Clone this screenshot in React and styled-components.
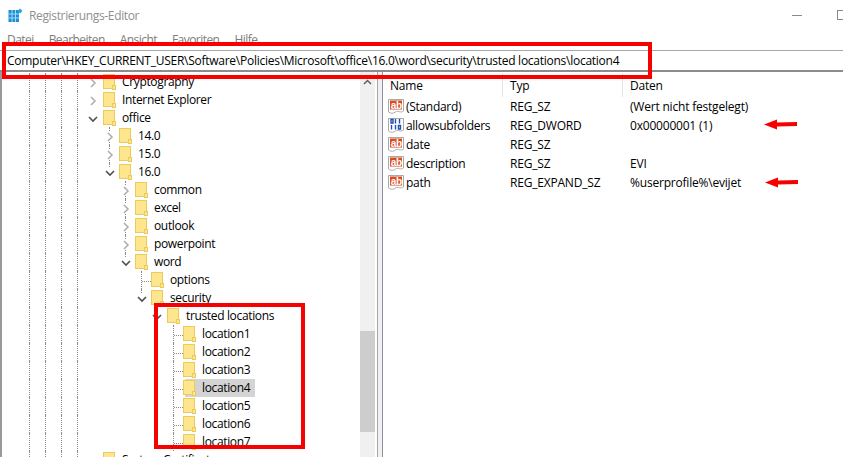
import React from 'react';
import styled, { createGlobalStyle } from 'styled-components';

const GlobalStyle = createGlobalStyle`
  html, body { margin: 0; padding: 0; background: #fff; overflow: hidden; }
  body { font-family: "Open Sans", "Noto Sans", sans-serif; font-size: 12px; color: #000; }
`;

const Window = styled.div`
  position: relative;
  width: 843px;
  height: 457px;
  display: flex;
  flex-direction: column;
  overflow: hidden;
  background: #fff;
`;

const TitleBar = styled.div`
  height: 30px;
  flex: none;
  display: flex;
  align-items: center;
  padding-left: 8px;
  gap: 6px;
  color: #8f8f8f;
`;

const TitleText = styled.span`
  font-size: 12px;
  flex: 1;
  letter-spacing: -0.35px;
`;

const WindowButtons = styled.div`
  display: flex;
  align-items: center;
  gap: 35px;
  margin-right: -4px;
`;

const Minimize = styled.span`
  width: 10px;
  height: 1px;
  background: #8a8a8a;
`;

const Maximize = styled.span`
  width: 10px;
  height: 10px;
  box-sizing: border-box;
  border: 1px solid #8a8a8a;
`;

const MenuBar = styled.div`
  height: 19px;
  flex: none;
  display: flex;
  gap: 15px;
  padding: 0 0 0 7px;
  align-items: center;
  color: #7d7d7d;
  font-size: 12px;
  letter-spacing: -0.55px;
`;

const AddressBar = styled.div`
  height: 19px;
  flex: none;
  margin-top: 1px;
  border-top: 1px solid #a8a8a8;
  border-bottom: 2px solid #8c8c8c;
  padding-left: 7px;
  line-height: 19px;
  font-size: 12px;
  white-space: nowrap;
  letter-spacing: -0.26px;
`;

const Panes = styled.div`
  flex: 1;
  min-height: 0;
  display: flex;
`;

const TreePane = styled.div`
  width: 360px;
  flex: none;
  padding-top: 1px;
  border-left: 2px solid #9a9a9a;
  box-sizing: border-box;
  overflow: hidden;
`;

const TreeRow = styled.div`
  height: 18px;
  display: flex;
  align-items: center;
  padding-left: 27px;
`;

const Guide = styled.span`
  width: 16px;
  height: 18px;
  flex: none;
  box-sizing: border-box;
  border-left: ${p => (p.$on ? '1px dotted #8a8a8a' : '0')};
`;

const Elbow = styled.span`
  width: 16px;
  height: ${p => (p.$last ? '10px' : '18px')};
  align-self: flex-start;
  flex: none;
  box-sizing: border-box;
  position: relative;
  border-left: ${p => (p.$line ? '1px dotted #8a8a8a' : '0')};
  &::after {
    content: '';
    display: ${p => (p.$stub ? 'block' : 'none')};
    position: absolute;
    left: 0;
    top: 10px;
    width: 9px;
    border-top: 1px dotted #8a8a8a;
  }
`;

const Chevron = styled.svg`
  position: absolute;
  left: -5px;
  top: 5px;
  width: 10px;
  height: 10px;
  background: #fff;
`;

const NodeIcon = styled.svg`
  flex: none;
  width: 13px;
  height: 16px;
  margin-left: -6px;
`;

const NodeLabel = styled.span`
  margin-left: 4px;
  padding: 0 2px 0 2px;
  line-height: 18px;
  letter-spacing: -0.35px;
  white-space: nowrap;
`;

const Selected = styled.div`
  display: flex;
  align-items: center;
  height: 18px;
  margin-left: -4px;
  padding-left: 4px;
  padding-right: 3px;
  background: ${p => (p.$on ? '#d4d4d4' : 'transparent')};
`;

const Scrollbar = styled.div`
  width: 15px;
  flex: none;
  background: #f0f0f0;
  display: flex;
  flex-direction: column;
  align-items: center;
`;

const ScrollArrow = styled.svg`
  width: 9px;
  height: 6px;
  margin: 7px 0 246px;
`;

const ScrollThumb = styled.div`
  width: 15px;
  height: 101px;
  background: #cdcdcd;
`;

const Splitter = styled.div`
  width: 8px;
  flex: none;
  box-sizing: border-box;
  background: linear-gradient(to right, #fff 2px, #a4a4a4 2px, #a4a4a4 3px, #f0f0f0 3px, #f0f0f0 7px, #8b8fa0 7px);
`;

const ListPane = styled.div`
  flex: 1;
  min-width: 0;
`;

const cols = '120px 120px 1fr';

const ListHeader = styled.div`
  display: grid;
  grid-template-columns: ${cols};
  height: 25px;
  align-items: center;
`;

const HeadCell = styled.div`
  height: 24px;
  line-height: 25px;
  padding-left: 7px;
  border-right: 1px solid #e5e5e5;
  letter-spacing: -0.2px;
  &:last-child { border-right: 0; }
`;

const ListRow = styled.div`
  display: grid;
  grid-template-columns: ${cols};
  height: 19px;
  align-items: center;
`;

const NameCell = styled.div`
  display: flex;
  align-items: center;
  gap: 2px;
  padding-left: 5px;
  letter-spacing: -0.3px;
  white-space: nowrap;
`;

const ListCell = styled.div`
  padding-left: 7px;
  letter-spacing: -0.2px;
  white-space: nowrap;
`;

const ValueIcon = styled.svg`
  width: 16px;
  height: 17px;
  flex: none;
`;

const AbText = styled.text`
  font-family: "Liberation Sans", sans-serif;
  font-size: 10px;
  font-weight: 700;
  letter-spacing: -0.2px;
  fill: #fff;
`;

const RedBox = styled.div`
  position: absolute;
  box-sizing: border-box;
  border: 4px solid #f60000;
  left: ${p => p.$x}px;
  top: ${p => p.$y}px;
  width: ${p => p.$w}px;
  height: ${p => p.$h}px;
`;

const RedArrow = styled.svg`
  position: absolute;
  left: ${p => p.$x}px;
  top: ${p => p.$y}px;
  width: 36px;
  height: 12px;
`;

function RegIcon() {
  return (
    <svg width="15" height="15" viewBox="0 0 15 15">
      <rect x="0.5" y="2" width="10.5" height="12" fill="#1e8fd6" />
      <path d="M4 2v12M7.5 2v12M0.5 6h10.5M0.5 10h10.5" stroke="#9fdcf6" strokeWidth="1" />
      <path d="M12 0.5l2.5 2.5-2.5 2.5-2.5-2.5z" fill="#2aa5dd" />
    </svg>
  );
}

function Folder() {
  return (
    <NodeIcon viewBox="0 0 13 16">
      <rect x="0.5" y="0.5" width="11" height="14" fill="#fde68e" stroke="#eccb5c" />
      <rect x="9.5" y="11.5" width="3" height="4" fill="#fde68e" stroke="#eccb5c" />
    </NodeIcon>
  );
}

function Expander({ open }) {
  return open ? (
    <Chevron viewBox="0 0 10 10">
      <path d="M1 3l4 4 4-4" fill="none" stroke="#4f4f4f" strokeWidth="1.6" />
    </Chevron>
  ) : (
    <Chevron viewBox="0 0 10 10">
      <path d="M3 1l4 4-4 4" fill="none" stroke="#b0b0b0" strokeWidth="1.6" />
    </Chevron>
  );
}

function Sheet() {
  return <path d="M0.5 1.5h15v11.5c-3 2.500-5-1-8 1s-4.500 1.500-7 0z" fill="#fff" stroke="#a8a8a8" />;
}

function AbIcon() {
  return (
    <ValueIcon viewBox="0 0 16 17">
      <Sheet />
      <rect x="2" y="2.500" width="12" height="9" fill="#dc4a20" />
      <AbText x="2.700" y="10.500">ab</AbText>
    </ValueIcon>
  );
}

function BinIcon() {
  return (
    <ValueIcon viewBox="0 0 16 17">
      <Sheet />
      <path d="M3 2.500h2v3.500h-2zM7.500 2v4.500M11.500 2v4.500M3.500 8v4.500M7.500 8v4.500M10.500 8.500h2v3.500h-2z" fill="none" stroke="#1f4fb0" strokeWidth="1.400" />
    </ValueIcon>
  );
}

function Arrow({ x, y }) {
  return (
    <RedArrow $x={x} $y={y} viewBox="0 0 36 12">
      <path d="M1 6.500L14 1.500v3L34 4v4L14 8.500v3z" fill="#f80000" />
    </RedArrow>
  );
}

// d: nesting below the office level, line: dotted guide runs through the expander column
const treeRows = [
  { label: 'Cryptography', d: 0, exp: 'closed' },
  { label: 'Internet Explorer', d: 0, exp: 'closed' },
  { label: 'office', d: 0, exp: 'open' },
  { label: '14.0', d: 1, exp: 'closed', line: true },
  { label: '15.0', d: 1, exp: 'closed', line: true },
  { label: '16.0', d: 1, exp: 'open', line: true, last: true },
  { label: 'common', d: 2, exp: 'closed', line: true },
  { label: 'excel', d: 2, exp: 'closed', line: true },
  { label: 'outlook', d: 2, exp: 'closed', line: true },
  { label: 'powerpoint', d: 2, exp: 'closed', line: true },
  { label: 'word', d: 2, exp: 'open', line: true, last: true },
  { label: 'options', d: 3, line: true, stub: true },
  { label: 'security', d: 3, exp: 'open', line: true, last: true },
  { label: 'trusted locations', d: 4, exp: 'open' },
  { label: 'location1', d: 5, line: true, stub: true },
  { label: 'location2', d: 5, line: true, stub: true },
  { label: 'location3', d: 5, line: true, stub: true },
  { label: 'location4', d: 5, line: true, stub: true, selected: true },
  { label: 'location5', d: 5, line: true, stub: true },
  { label: 'location6', d: 5, line: true, stub: true },
  { label: 'location7', d: 5, line: true, stub: true },
  { label: 'System Certificates', d: 0 },
];

const values = [
  { icon: 'ab', name: '(Standard)', type: 'REG_SZ', data: '(Wert nicht festgelegt)' },
  { icon: 'bin', name: 'allowsubfolders', type: 'REG_DWORD', data: '0x00000001 (1)' },
  { icon: 'ab', name: 'date', type: 'REG_SZ', data: '' },
  { icon: 'ab', name: 'description', type: 'REG_SZ', data: 'EVI' },
  { icon: 'ab', name: 'path', type: 'REG_EXPAND_SZ', data: '%userprofile%\\evijet' },
];

export default function App() {
  return (
    <Window>
      <GlobalStyle />
      <TitleBar>
        <RegIcon />
        <TitleText>Registrierungs-Editor</TitleText>
        <WindowButtons>
          <Minimize />
          <Maximize />
        </WindowButtons>
      </TitleBar>
      <MenuBar>
        <span>Datei</span>
        <span>Bearbeiten</span>
        <span>Ansicht</span>
        <span>Favoriten</span>
        <span>Hilfe</span>
      </MenuBar>
      <AddressBar>Computer\HKEY_CURRENT_USER\Software\Policies\Microsoft\office\16.0\word\security\trusted locations\location4</AddressBar>
      <Panes>
        <TreePane>
          {treeRows.map(row => (
            <TreeRow key={row.label}>
              {[0, 1, 2, 3].map(i => <Guide key={i} $on />)}
              {Array.from({ length: row.d }).map((_, i) => <Guide key={i} />)}
              <Elbow $line={row.line} $stub={row.stub} $last={row.last}>
                {row.exp && <Expander open={row.exp === 'open'} />}
              </Elbow>
              <Selected $on={row.selected}>
                <Folder />
                <NodeLabel>{row.label}</NodeLabel>
              </Selected>
            </TreeRow>
          ))}
        </TreePane>
        <Scrollbar>
          <ScrollArrow viewBox="0 0 9 6">
            <path d="M1 5l3.500-3.500L8 5" fill="none" stroke="#606060" strokeWidth="1.500" />
          </ScrollArrow>
          <ScrollThumb />
        </Scrollbar>
        <Splitter />
        <ListPane>
          <ListHeader>
            <HeadCell>Name</HeadCell>
            <HeadCell>Typ</HeadCell>
            <HeadCell>Daten</HeadCell>
          </ListHeader>
          {values.map(v => (
            <ListRow key={v.name}>
              <NameCell>
                {v.icon === 'ab' ? <AbIcon /> : <BinIcon />}
                {v.name}
              </NameCell>
              <ListCell>{v.type}</ListCell>
              <ListCell>{v.data}</ListCell>
            </ListRow>
          ))}
        </ListPane>
      </Panes>
      <RedBox $x={2} $y={42} $w={650} $h={37} />
      <RedBox $x={154} $y={303} $w={151} $h={146} />
      <Arrow x={763} y={118} />
      <Arrow x={764} y={176} />
    </Window>
  );
}
